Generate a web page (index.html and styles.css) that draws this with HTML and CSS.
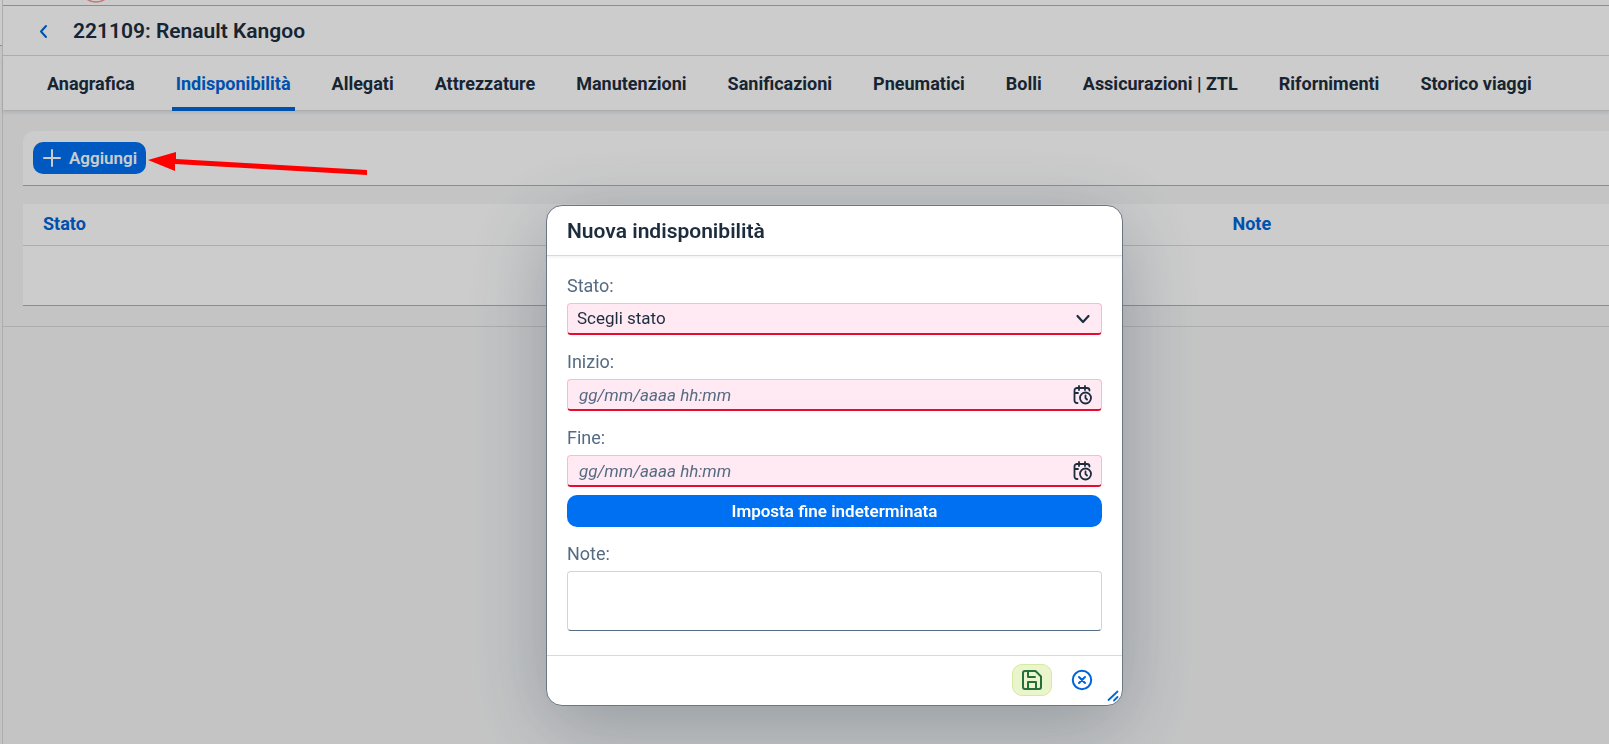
FILE: index.html
```
<!DOCTYPE html>
<html lang="it">
<head>
    <meta charset="UTF-8">
    <meta name="viewport" content="width=device-width, initial-scale=1.0">
    <title>221109: Renault Kangoo</title>
    <link rel="stylesheet" href="styles.css">
</head>
<body>

    <div class="app">
        <aside class="sidebar"><div class="sidebar-top"></div></aside>

        <div class="content">
            <div class="shell-bar">
                <svg class="shell-logo" width="32" height="6" viewBox="0 0 32 6" fill="none" stroke="#ff8f8f" stroke-width="1.5"><circle cx="16" cy="-14" r="16"/></svg>
            </div>

            <header class="title-bar">
                <button class="back" type="button" aria-label="Indietro">
                    <svg width="16" height="16" viewBox="0 0 16 16" fill="none" stroke="#0064d9" stroke-width="2" stroke-linecap="round" stroke-linejoin="round"><path d="M11 3 6 8.500l5 5.500"/></svg>
                </button>
                <h1>221109: Renault Kangoo</h1>
            </header>

            <nav class="tabs">
                <a href="#">Anagrafica</a>
                <a href="#" class="active">Indisponibilità</a>
                <a href="#">Allegati</a>
                <a href="#">Attrezzature</a>
                <a href="#">Manutenzioni</a>
                <a href="#">Sanificazioni</a>
                <a href="#">Pneumatici</a>
                <a href="#">Bolli</a>
                <a href="#">Assicurazioni | ZTL</a>
                <a href="#">Rifornimenti</a>
                <a href="#">Storico viaggi</a>
            </nav>

            <main class="panel">
                <div class="toolbar">
                    <button class="btn" type="button">
                        <svg width="20" height="20" viewBox="0 0 20 20" fill="none" stroke="#fff" stroke-width="2" stroke-linecap="round"><path d="M10 2v16M2 10h16"/></svg>
                        Aggiungi
                    </button>
                </div>

                <table class="list">
                    <thead>
                        <tr><th class="col-stato">Stato</th><th>Note</th></tr>
                    </thead>
                    <tbody>
                        <tr><td></td><td></td></tr>
                    </tbody>
                </table>
            </main>
        </div>
    </div>

    <div class="overlay">
        <form class="dialog" role="dialog" aria-labelledby="dialog-title">
            <h2 id="dialog-title">Nuova indisponibilità</h2>

            <div class="dialog-body">
                <label for="stato">Stato:</label>
                <div class="field">
                    <select id="stato" name="stato" required>
                        <option>Scegli stato</option>
                    </select>
                    <svg class="field-icon" width="20" height="20" viewBox="0 0 20 20" fill="none" stroke="#1d2d3e" stroke-width="2.200" stroke-linecap="round" stroke-linejoin="round"><path d="M4.500 7 10 13 15.500 7"/></svg>
                </div>

                <label for="inizio">Inizio:</label>
                <div class="field">
                    <input type="text" id="inizio" name="inizio" placeholder="gg/mm/aaaa hh:mm" required>
                    <svg class="field-icon" width="20" height="20" viewBox="0 0 20 20" fill="none" stroke="#1d2d3e" stroke-width="1.8" stroke-linecap="round" stroke-linejoin="round"><path d="M6 1v4M12 1v4M4.500 18H4a2.500 2.500 0 0 1-2.500-2.500V5.500A2.500 2.500 0 0 1 4 3h10a2.500 2.500 0 0 1 2.500 2.500M2 8h3"/><circle cx="12.500" cy="13" r="5.500"/><path d="M12.500 10.500V13l1.500 1.500"/></svg>
                </div>

                <label for="fine">Fine:</label>
                <div class="field">
                    <input type="text" id="fine" name="fine" placeholder="gg/mm/aaaa hh:mm" required>
                    <svg class="field-icon" width="20" height="20" viewBox="0 0 20 20" fill="none" stroke="#1d2d3e" stroke-width="1.8" stroke-linecap="round" stroke-linejoin="round"><path d="M6 1v4M12 1v4M4.500 18H4a2.500 2.500 0 0 1-2.500-2.500V5.500A2.500 2.500 0 0 1 4 3h10a2.500 2.500 0 0 1 2.500 2.500M2 8h3"/><circle cx="12.500" cy="13" r="5.500"/><path d="M12.500 10.500V13l1.500 1.500"/></svg>
                </div>
                <button class="btn wide" type="button">Imposta fine indeterminata</button>

                <label for="note">Note:</label>
                <textarea id="note" name="note"></textarea>
            </div>

            <footer class="dialog-footer">
                <button class="icon-btn save" type="submit" aria-label="Salva">
                    <svg width="22" height="22" viewBox="0 0 22 22" fill="none" stroke="#256f3a" stroke-width="2" stroke-linecap="round" stroke-linejoin="round"><path d="M4 2h10.500L20 7.500V18a2 2 0 0 1-2 2H4a2 2 0 0 1-2-2V4a2 2 0 0 1 2-2zM7 2v6h7M7 20v-7h8v7"/></svg>
                </button>
                <button class="icon-btn" type="button" aria-label="Annulla">
                    <svg width="22" height="22" viewBox="0 0 22 22" fill="none" stroke="#0064d9" stroke-width="2" stroke-linecap="round"><circle cx="11" cy="11" r="9.200"/><path d="m8 8 6 6M14 8l-6 6"/></svg>
                </button>
            </footer>

            <svg class="resize" width="12" height="12" viewBox="0 0 12 12" fill="none" stroke="#0064d9" stroke-width="1.800" stroke-linecap="round"><path d="m1.500 10 9-8.500M7 10.500 10.500 7"/></svg>
        </form>
    </div>

    <!-- arrow pointing at the add button -->
    <svg class="arrow" width="220" height="26" viewBox="0 0 220 26" fill="#f00"><path d="M0 9 28 1v7L219 19v5L27 13v7z"/></svg>

</body>
</html>
```
FILE: styles.css
```
* {
    box-sizing: border-box;
}

body {
    margin: 0;
    min-height: 100vh;
    font-family: Roboto, "Liberation Sans", sans-serif;
    font-size: 18px;
    line-height: 24px;
    color: #1d2d3e;
    background-color: #f5f6f7;
}

button, input, select, textarea {
    font: inherit;
    font-size: 17px;
    color: inherit;
}

h1, h2 {
    margin: 0;
    font-size: 21px;
    font-weight: 600;
}

.app {
    display: flex;
    min-height: 100vh;
}

.sidebar {
    width: 3px;
    border-right: 1px solid #d9d9d9;
}

.sidebar-top {
    height: 46px;
    background-color: #fff;
    border-bottom: 1px solid #a8b0b8;
}

.content {
    flex: 1;
}

.shell-bar {
    height: 6px;
    padding-left: 77px;
    background-color: #fff;
    border-bottom: 1px solid #a8b3be;
}

.shell-logo {
    display: block;
}

.title-bar {
    display: flex;
    align-items: center;
    gap: 22px;
    height: 50px;
    padding-left: 32px;
    background-color: #fff;
    border-bottom: 1px solid #d9d9d9;
}

.back {
    display: flex;
    padding: 0;
    border: none;
    background: none;
    cursor: pointer;
}

.tabs {
    display: flex;
    gap: 33px;
    height: 55px;
    padding-left: 40px;
    background-color: #fff;
    border-bottom: 1px solid #d9d9d9;
    box-shadow: 0 2px 3px rgba(34, 53, 72, 0.1);
}

.tabs a {
    height: 55px;
    padding: 16px 4px 0;
    color: #1d2d3e;
    font-weight: 700;
    text-decoration: none;
    white-space: nowrap;
}

.tabs .active {
    color: #0064d9;
    border-bottom: 4px solid #0064d9;
    border-radius: 2px 2px 0 0;
}

.panel {
    padding: 20px 0 20px 20px;
    border-bottom: 1px solid #d9d9d9;
}

.toolbar {
    padding: 11px 10px;
    background-color: #fff;
    border-bottom: 1px solid #a8b3be;
    border-top-left-radius: 12px;
}

.btn {
    display: flex;
    align-items: center;
    justify-content: center;
    gap: 7px;
    height: 32px;
    padding: 0 9px 1px;
    border: none;
    border-radius: 10px;
    background-color: #0070f2;
    color: #fff;
    font-weight: 600;
    cursor: pointer;
}

.wide {
    width: 100%;
    margin-top: 8px;
}

.list {
    width: 100%;
    margin-top: 18px;
    border-collapse: separate;
    border-spacing: 0;
    background-color: #fff;
    border-bottom: 1px solid #a8b3be;
}

.list th {
    padding: 8px 20px 9px;
    color: #0064d9;
    font-weight: 700;
    text-align: left;
    border-bottom: 1px solid #d9d9d9;
}

.list td {
    height: 59px;
}

.col-stato {
    width: 75%;
}

.overlay {
    position: fixed;
    inset: 0;
    display: flex;
    align-items: flex-start;
    justify-content: center;
    padding: 205px 0 0 60px;
    background-color: rgba(0, 0, 0, 0.2);
}

.dialog {
    position: relative;
    width: 577px;
    background-color: #fff;
    border: 1px solid #6b7785;
    border-radius: 16px;
    box-shadow: 0 20px 80px rgba(34, 53, 72, 0.3);
}

.dialog h2 {
    padding: 13px 20px 12px;
    border-bottom: 1px solid #d9d9d9;
    box-shadow: 0 2px 2px rgba(34, 53, 72, 0.05);
}

.dialog-body {
    padding: 3px 20px 24px;
}

.dialog-body label {
    display: block;
    padding: 15px 0 5px;
    color: #556b82;
}

.field {
    position: relative;
}

.field select, .field input {
    display: block;
    width: 100%;
    height: 32px;
    padding: 0 40px 2px 9px;
    border: 1px solid #ffb8d2;
    border-bottom: 2px solid #e90b2f;
    border-radius: 4px;
    background-color: #ffeaf4;
    appearance: none;
}

.field input {
    padding: 0 40px 0 11px;
}

.field input::placeholder {
    color: #556b82;
    font-style: italic;
    opacity: 1;
}

.field-icon {
    position: absolute;
    top: 6px;
    right: 9px;
    pointer-events: none;
}

textarea {
    display: block;
    width: 100%;
    height: 60px;
    border: 1px solid #d0d5da;
    border-bottom-color: #556b82;
    border-radius: 4px;
    resize: none;
}

.dialog-footer {
    display: flex;
    justify-content: flex-end;
    gap: 10px;
    padding: 8px 20px 9px;
    border-top: 1px solid #d9d9d9;
}

.icon-btn {
    display: flex;
    align-items: center;
    justify-content: center;
    width: 40px;
    height: 32px;
    padding: 0;
    border: 1px solid transparent;
    border-radius: 10px;
    background: none;
    cursor: pointer;
}

.save {
    border-color: #d7e8a0;
    background-color: #ebf5cb;
}

.resize {
    position: absolute;
    right: 3px;
    bottom: 3px;
}

.arrow {
    position: absolute;
    top: 151px;
    left: 148px;
}
```
